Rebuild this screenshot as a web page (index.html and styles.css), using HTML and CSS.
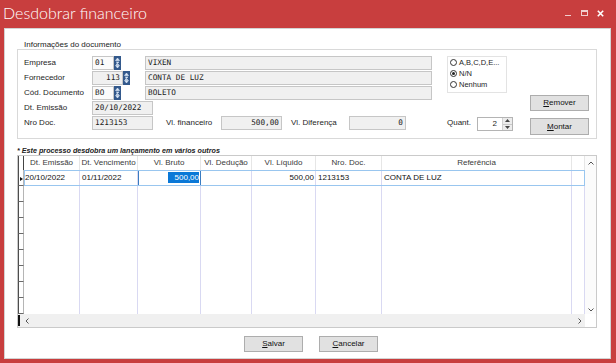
FILE: index.html
```html
<!DOCTYPE html>
<html lang="pt">
<head>
<meta charset="utf-8">
<title>Desdobrar financeiro</title>
<link rel="stylesheet" href="styles.css">
</head>
<body>
<div class="window">
  <div class="titlebar">
    <span class="title">Desdobrar financeiro</span>
    <div class="wincontrols">
      <span class="wc"><span class="wc-min"></span></span>
      <span class="wc"><span class="wc-max"></span></span>
      <span class="wc"><svg width="7" height="7" viewBox="0 0 7 7"><path d="M0.8 0.8L6.2 6.2M6.2 0.8L0.8 6.2" stroke="#fff" stroke-width="1.6"/></svg></span>
    </div>
  </div>
  <div class="client">
    <div class="grouplabel">Informações do documento</div>
    <div class="groupbox">
      <div class="fleft">
        <div class="row">
          <span class="lbl">Empresa</span>
          <span class="field edit w-code1">01</span>
          <svg class="lookup" width="7" height="14" viewBox="0 0 7 14"><rect width="7" height="14" fill="#33598c"/><path d="M3.5 2L5.5 4.5H1.5Z M2 6H5L2 8.5H5 M3.5 12L5.5 9.5H1.5Z" fill="#dbe8f7" stroke="#dbe8f7" stroke-width="0.6"/></svg>
          <span class="field name">VIXEN</span>
        </div>
        <div class="row">
          <span class="lbl">Fornecedor</span>
          <span class="field num w-code2">113</span>
          <svg class="lookup" width="7" height="14" viewBox="0 0 7 14"><rect width="7" height="14" fill="#33598c"/><path d="M3.5 2L5.5 4.5H1.5Z M2 6H5L2 8.5H5 M3.5 12L5.5 9.5H1.5Z" fill="#dbe8f7" stroke="#dbe8f7" stroke-width="0.6"/></svg>
          <span class="field name">CONTA DE LUZ</span>
        </div>
        <div class="row">
          <span class="lbl">Cód. Documento</span>
          <span class="field edit w-code1">BO</span>
          <svg class="lookup" width="7" height="14" viewBox="0 0 7 14"><rect width="7" height="14" fill="#33598c"/><path d="M3.5 2L5.5 4.5H1.5Z M2 6H5L2 8.5H5 M3.5 12L5.5 9.5H1.5Z" fill="#dbe8f7" stroke="#dbe8f7" stroke-width="0.6"/></svg>
          <span class="field name">BOLETO</span>
        </div>
        <div class="row">
          <span class="lbl">Dt. Emissão</span>
          <span class="field w-date">20/10/2022</span>
        </div>
        <div class="row">
          <span class="lbl">Nro Doc.</span>
          <span class="field w-date">1213153</span>
          <span class="lbl2 l-fin">Vl. financeiro</span>
          <span class="field num w-fin">500,00</span>
          <span class="lbl2 l-dif">Vl. Diferença</span>
          <span class="field num w-dif">0</span>
        </div>
      </div>
      <div class="fmid">
        <div class="radiobox">
          <div class="radio"><span class="circle"></span>A,B,C,D,E...</div>
          <div class="radio"><span class="circle checked"></span>N/N</div>
          <div class="radio"><span class="circle"></span>Nenhum</div>
        </div>
        <div class="quant">
          <span class="qlbl">Quant.</span>
          <span class="spin">
            <span class="spinval">2</span>
            <span class="spinbtns">
              <span class="sb"><svg width="5" height="3" viewBox="0 0 5 3"><path d="M2.5 0L5 3H0Z" fill="#444"/></svg></span>
              <span class="sb"><svg width="5" height="3" viewBox="0 0 5 3"><path d="M0 0H5L2.5 3Z" fill="#444"/></svg></span>
            </span>
          </span>
        </div>
      </div>
      <div class="fright">
        <button class="btn btn-rem"><u>R</u>emover</button>
        <button class="btn btn-mon"><u>M</u>ontar</button>
      </div>
    </div>
    <div class="note">* Este processo desdobra um lançamento em vários outros</div>
    <div class="grid">
      <div class="gmain">
        <div class="grow ghead">
          <span class="ind"></span>
          <div class="cells">
            <span class="hc">Dt. Emissão</span>
            <span class="hc">Dt. Vencimento</span>
            <span class="hc">Vl. Bruto</span>
            <span class="hc">Vl. Dedução</span>
            <span class="hc">Vl. Líquido</span>
            <span class="hc">Nro. Doc.</span>
            <span class="hc">Referência</span>
            <span class="hc"></span>
          </div>
        </div>
        <div class="grow">
          <span class="ind"><span class="tri"></span></span>
          <div class="cells cur">
            <span class="c c-first">20/10/2022</span>
            <span class="c">01/11/2022</span>
            <span class="c r focus"><span class="sel">500,00</span></span>
            <span class="c"></span>
            <span class="c r">500,00</span>
            <span class="c">1213153</span>
            <span class="c">CONTA DE LUZ</span>
            <span class="c"></span>
          </div>
        </div>
        <div class="grow"><span class="ind"></span><div class="cells"><span class="c"></span><span class="c"></span><span class="c"></span><span class="c"></span><span class="c"></span><span class="c"></span><span class="c"></span><span class="c"></span></div></div>
        <div class="grow"><span class="ind"></span><div class="cells"><span class="c"></span><span class="c"></span><span class="c"></span><span class="c"></span><span class="c"></span><span class="c"></span><span class="c"></span><span class="c"></span></div></div>
        <div class="grow"><span class="ind"></span><div class="cells"><span class="c"></span><span class="c"></span><span class="c"></span><span class="c"></span><span class="c"></span><span class="c"></span><span class="c"></span><span class="c"></span></div></div>
        <div class="grow"><span class="ind"></span><div class="cells"><span class="c"></span><span class="c"></span><span class="c"></span><span class="c"></span><span class="c"></span><span class="c"></span><span class="c"></span><span class="c"></span></div></div>
        <div class="grow"><span class="ind"></span><div class="cells"><span class="c"></span><span class="c"></span><span class="c"></span><span class="c"></span><span class="c"></span><span class="c"></span><span class="c"></span><span class="c"></span></div></div>
        <div class="grow"><span class="ind"></span><div class="cells"><span class="c"></span><span class="c"></span><span class="c"></span><span class="c"></span><span class="c"></span><span class="c"></span><span class="c"></span><span class="c"></span></div></div>
        <div class="grow"><span class="ind"></span><div class="cells"><span class="c"></span><span class="c"></span><span class="c"></span><span class="c"></span><span class="c"></span><span class="c"></span><span class="c"></span><span class="c"></span></div></div>
        <div class="grow"><span class="ind"></span><div class="cells"><span class="c"></span><span class="c"></span><span class="c"></span><span class="c"></span><span class="c"></span><span class="c"></span><span class="c"></span><span class="c"></span></div></div>
        <div class="hscroll">
          <span class="hbar"></span>
          <svg class="harr" width="4" height="6" viewBox="0 0 4 6"><path d="M3.5 0.5L1 3L3.5 5.5" fill="none" stroke="#555" stroke-width="1"/></svg>
          <svg class="harr harr-r" width="4" height="6" viewBox="0 0 4 6"><path d="M0.5 0.5L3 3L0.5 5.5" fill="none" stroke="#555" stroke-width="1"/></svg>
        </div>
      </div>
      <div class="vscroll">
        <div class="vtrack">
          <svg width="6" height="4" viewBox="0 0 6 4"><path d="M0.5 3.5L3 1L5.5 3.5" fill="none" stroke="#555" stroke-width="1"/></svg>
          <svg width="6" height="4" viewBox="0 0 6 4"><path d="M0.5 0.5L3 3L5.5 0.5" fill="none" stroke="#555" stroke-width="1"/></svg>
        </div>
        <div class="corner"></div>
      </div>
    </div>
    <div class="footer">
      <button class="btn"><u>S</u>alvar</button>
      <button class="btn"><u>C</u>ancelar</button>
    </div>
  </div>
</div>
</body>
</html>
```

FILE: styles.css
```css
* { box-sizing: border-box; }
html, body { margin: 0; padding: 0; }
body {
  width: 616px;
  height: 363px;
  overflow: hidden;
  font-family: "Liberation Sans", Arial, sans-serif;
  font-size: 8px;
  color: #1e1e1e;
  background: #c83e3e;
}
.window {
  width: 616px;
  height: 363px;
  background: #c83e3e;
  display: flex;
  flex-direction: column;
  padding: 0 5px 4px 4px;
}
.titlebar {
  height: 28px;
  flex: none;
  display: flex;
  align-items: flex-start;
}
.title {
  font-family: Lato, "Open Sans", sans-serif;
  font-weight: 300;
  font-size: 16px;
  line-height: 20px;
  color: #fff;
  margin-top: 3px;
  margin-left: -1px;
  white-space: nowrap;
}
.wincontrols {
  margin-left: auto;
  margin-right: 3px;
  display: flex;
  height: 26px;
  align-items: center;
}
.wc {
  width: 16px;
  height: 16px;
  display: flex;
  align-items: center;
  justify-content: center;
}
.wc-min {
  width: 6px;
  height: 1px;
  background: rgba(255,255,255,0.75);
  margin-top: 4px;
}
.wc-max {
  width: 7px;
  height: 6px;
  border: 1px solid rgba(255,255,255,0.75);
  border-top-width: 2px;
}
.client {
  flex: 1;
  background: #fff;
  border: 1px solid #d3d3d3;
  padding: 0 13px 0 12px;
  display: flex;
  flex-direction: column;
}
.grouplabel {
  margin-top: 11px;
  height: 9px;
  line-height: 9px;
  padding-left: 7px;
  color: #1a1a1a;
}
.groupbox {
  height: 90px;
  flex: none;
  border: 1px solid #d9d9d9;
  padding: 6px 7px 3px 6px;
  display: flex;
}
.fleft {
  width: 408px;
  display: flex;
  flex-direction: column;
  gap: 1px;
}
.row {
  height: 14px;
  display: flex;
  align-items: center;
}
.lbl {
  width: 68px;
  line-height: 14px;
  white-space: nowrap;
}
.field {
  height: 14px;
  border: 1px solid #c6c6c6;
  background: #f0f0f0;
  font-family: "DejaVu Sans Mono", "Liberation Mono", monospace;
  font-size: 7.7px;
  line-height: 12px;
  padding: 0 2px;
  white-space: nowrap;
  overflow: hidden;
  color: #222;
}
.field.edit { background: #fbfbfb; }
.num { text-align: right; }
.w-code1 { width: 22px; }
.w-code2 { width: 31px; }
.lookup { flex: none; display: block; }
.name { width: 287px; margin-left: auto; }
.w-date { width: 61px; }
.lbl2 { line-height: 14px; white-space: nowrap; }
.l-fin { margin-left: 13px; width: 55px; }
.w-fin { width: 61px; }
.l-dif { margin-left: 9px; width: 58px; }
.w-dif { width: 57px; }

.fmid {
  width: 66px;
  margin-left: 15px;
  display: flex;
  flex-direction: column;
}
.radiobox {
  width: 60px;
  height: 37px;
  border: 1px solid #e3e3e3;
  padding: 0 0 0 2px;
}
.radio {
  height: 11px;
  display: flex;
  align-items: center;
  gap: 2px;
  white-space: nowrap;
  font-size: 7.5px;
}
.circle {
  width: 7px;
  height: 7px;
  border: 1px solid #333;
  border-radius: 50%;
  display: flex;
  align-items: center;
  justify-content: center;
  flex: none;
}
.circle.checked::after {
  content: "";
  width: 3px;
  height: 3px;
  border-radius: 50%;
  background: #222;
}
.quant {
  margin-top: auto;
  margin-bottom: 4px;
  height: 14px;
  display: flex;
  align-items: center;
}
.qlbl { width: 30px; line-height: 12px; margin-top: -3px; }
.spin {
  width: 36px;
  height: 14px;
  border: 1px solid #b4b4b4;
  background: #fff;
  display: flex;
}
.spinval {
  flex: 1;
  text-align: right;
  padding-right: 5px;
  line-height: 12px;
}
.spinbtns {
  width: 10px;
  display: flex;
  flex-direction: column;
  border-left: 1px solid #d0d0d0;
}
.sb {
  flex: 1;
  display: flex;
  align-items: center;
  justify-content: center;
  background: #ececec;
}
.sb + .sb { border-top: 1px solid #c8c8c8; }
.fright {
  width: 59px;
  margin-left: 17px;
  display: flex;
  flex-direction: column;
  justify-content: flex-end;
  gap: 7px;
}
.btn {
  width: 59px;
  height: 16px;
  border: 1px solid #adadad;
  background: #e1e1e1;
  font-family: "Liberation Sans", Arial, sans-serif;
  font-size: 8px;
  color: #111;
  padding: 0;
  line-height: 14px;
  text-align: center;
}
.btn-mon { height: 17px; }
.note {
  margin-top: 7px;
  height: 9px;
  line-height: 9px;
  font-weight: bold;
  font-style: italic;
  font-size: 7.2px;
  color: #222;
  white-space: nowrap;
}
.grid {
  height: 173px;
  flex: none;
  border: 1px solid #cacaca;
  display: flex;
}
.gmain {
  width: 567px;
  display: flex;
  flex-direction: column;
}
.grow {
  height: 16px;
  display: flex;
}
.grow.ghead { height: 14px; }
.ind {
  width: 6px;
  flex: none;
  border-left: 1px solid #4d4d4d;
  border-bottom: 1px solid #6a6a6a;
  border-right: 1px solid #b5b5b5;
  background: #fff;
  display: flex;
  align-items: center;
}
.ghead .ind { border-bottom: none; border-right: 1px solid #444; }
.tri {
  width: 0;
  height: 0;
  border-left: 3px solid #111;
  border-top: 2.5px solid transparent;
  border-bottom: 2.5px solid transparent;
  margin-left: 1px;
  margin-top: 3px;
}
.cells {
  width: 561px;
  display: grid;
  grid-template-columns: 56px 58px 63px 51px 64px 66px 190px 13px;
}
.hc {
  border-right: 1px solid #e6e6e6;
  text-align: center;
  line-height: 14px;
  color: #3a3a3a;
  white-space: nowrap;
  overflow: hidden;
}
.c {
  border-right: 1px solid #d9d9f2;
  line-height: 15px;
  padding: 0 2px;
  white-space: nowrap;
  overflow: hidden;
  color: #111;
}
.c-first { padding-left: 1px; }
.c.r { text-align: right; padding-right: 1px; }
.cells.cur { outline: 1px solid #99c6ef; outline-offset: -1px; }
.c.focus { outline: 1px solid #3a7cc1; outline-offset: -1px; padding-right: 1px; }
.sel {
  background: #0a78d7;
  color: #fff;
  padding: 1px 0 1px 7px;
}
.hscroll {
  height: 13px;
  background: #f0f0f0;
  display: flex;
  align-items: center;
  flex: none;
  margin-top: 0;
}
.hbar {
  width: 2px;
  height: 11px;
  background: #111;
  margin-left: 0;
}
.harr { margin-left: 5px; }
.harr-r { margin-left: auto; margin-right: 3px; }
.vscroll {
  width: 11px;
  display: flex;
  flex-direction: column;
}
.vtrack {
  flex: 1;
  background: #fbfbfb;
  display: flex;
  flex-direction: column;
  justify-content: space-between;
  align-items: center;
  padding: 5px 0 2px;
}
.corner { height: 13px; background: #fff; }
.footer {
  display: flex;
  gap: 16px;
  margin-top: 8px;
  margin-left: 227px;
}
```
